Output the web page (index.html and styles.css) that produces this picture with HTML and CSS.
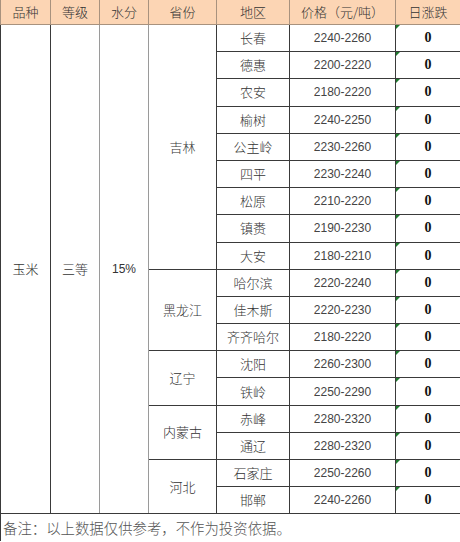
FILE: index.html
```html
<!DOCTYPE html>
<html lang="zh">
<head>
<meta charset="utf-8">
<link rel="stylesheet" href="styles.css">
</head>
<body>
<table class="grid">
  <colgroup>
    <col class="c1"><col class="c2"><col class="c3"><col class="c4"><col class="c5"><col class="c6"><col class="c7">
  </colgroup>
  <thead>
    <tr class="head">
      <th>品种</th><th class="g">等级</th><th class="g">水分</th><th>省份</th><th class="g">地区</th><th>价格（元/吨）</th><th>日涨跌</th>
    </tr>
  </thead>
  <tbody>
    <tr>
      <td rowspan="18" class="dk">玉米</td>
      <td rowspan="18" class="gl">三等</td>
      <td rowspan="18" class="gl num">15%</td>
      <td rowspan="9">吉林</td>
      <td>长春</td><td class="price">2240-2260</td><td class="chg"><span class="tri"></span>0</td>
    </tr>
    <tr><td>德惠</td><td class="price">2200-2220</td><td class="chg"><span class="tri"></span>0</td></tr>
    <tr><td>农安</td><td class="price">2180-2220</td><td class="chg"><span class="tri"></span>0</td></tr>
    <tr><td>榆树</td><td class="price">2240-2250</td><td class="chg"><span class="tri"></span>0</td></tr>
    <tr><td>公主岭</td><td class="price">2230-2260</td><td class="chg"><span class="tri"></span>0</td></tr>
    <tr><td>四平</td><td class="price">2230-2240</td><td class="chg"><span class="tri"></span>0</td></tr>
    <tr><td>松原</td><td class="price">2210-2220</td><td class="chg"><span class="tri"></span>0</td></tr>
    <tr><td>镇赉</td><td class="price">2190-2230</td><td class="chg"><span class="tri"></span>0</td></tr>
    <tr><td>大安</td><td class="price">2180-2210</td><td class="chg"><span class="tri"></span>0</td></tr>
    <tr><td rowspan="3" class="prov">黑龙江</td><td>哈尔滨</td><td class="price">2220-2240</td><td class="chg"><span class="tri"></span>0</td></tr>
    <tr><td>佳木斯</td><td class="price">2220-2230</td><td class="chg"><span class="tri"></span>0</td></tr>
    <tr><td>齐齐哈尔</td><td class="price">2180-2220</td><td class="chg"><span class="tri"></span>0</td></tr>
    <tr><td rowspan="2" class="prov">辽宁</td><td>沈阳</td><td class="price">2260-2300</td><td class="chg"><span class="tri"></span>0</td></tr>
    <tr><td>铁岭</td><td class="price">2250-2290</td><td class="chg"><span class="tri"></span>0</td></tr>
    <tr><td rowspan="2" class="prov">内蒙古</td><td>赤峰</td><td class="price">2280-2320</td><td class="chg"><span class="tri"></span>0</td></tr>
    <tr><td>通辽</td><td class="price">2280-2320</td><td class="chg"><span class="tri"></span>0</td></tr>
    <tr><td rowspan="2" class="prov">河北</td><td>石家庄</td><td class="price">2250-2260</td><td class="chg"><span class="tri"></span>0</td></tr>
    <tr><td>邯郸</td><td class="price">2240-2260</td><td class="chg"><span class="tri"></span>0</td></tr>
    <tr class="note"><td colspan="7">备注：以上数据仅供参考，不作为投资依据。</td></tr>
  </tbody>
</table>
</body>
</html>
```

FILE: styles.css
```css
html, body {
  margin: 0;
  padding: 0;
  background: #ffffff;
}
body {
  width: 460px;
  height: 542px;
  overflow: hidden;
}
.grid {
  border-collapse: collapse;
  table-layout: fixed;
  width: 460px;
  margin-left: 0;
  font-family: "Noto Sans CJK SC", "Noto Sans", sans-serif;
  font-weight: 300;
  font-size: 13px;
  color: #333333;
}
.c1 { width: 50px; }
.c2 { width: 49px; }
.c3 { width: 49px; }
.c4 { width: 68px; }
.c5 { width: 73px; }
.c6 { width: 106px; }
.c7 { width: 65px; }

.grid th,
.grid td {
  border: 1px solid #3a3a3a;
  padding: 0;
  text-align: center;
  vertical-align: middle;
  line-height: 16px;
  white-space: nowrap;
  overflow: hidden;
}
.head th {
  background: #fcd5b4;
  font-weight: 300;
  height: 24px;
  color: #333333;
  border-color: #a8927e;
  border-top: none;
}
.grid tbody tr { height: 27.2px; }
.grid td.gl { border-left-color: #9a9a9a; border-right-color: #9a9a9a; }
.grid td.num { font-family: "Liberation Sans", sans-serif; font-size: 12px; font-weight: normal; }
.grid td.price {
  font-family: "Liberation Sans", sans-serif;
  font-weight: normal;
  font-size: 12px;
  color: #444444;
  border-left-color: #9a9a9a;
}
.grid td.chg {
  position: relative;
  font-family: "Liberation Serif", serif;
  font-weight: bold;
  font-size: 14px;
  color: #111;
}
.tri {
  position: absolute;
  left: 0;
  top: 0;
  width: 0;
  height: 0;
  border-top: 4px solid #1e7a2e;
  border-right: 4px solid transparent;
}
.grid .note td {
  text-align: left;
  font-size: 14.4px;
  color: #555;
  padding-left: 2px;
  height: 27px;
  border-bottom: none;
  border-right: none;
}
```
